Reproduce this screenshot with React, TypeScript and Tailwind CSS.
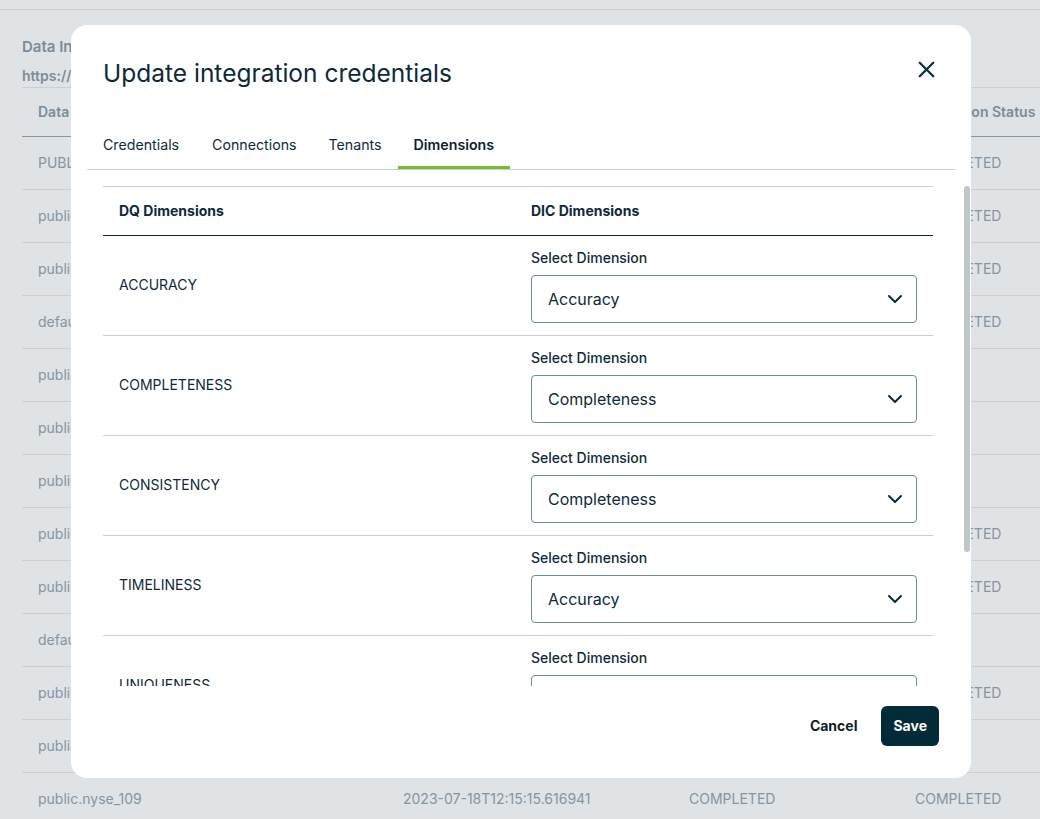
import React from 'react';
import { X, ChevronDown } from 'lucide-react';

const bgRows = [
  ['PUBLIC.NYSE_100', '2023-07-18T12:15:15.616941', 'COMPLETED', 'COMPLETED'],
  ['public.nyse_101', '2023-07-18T12:15:15.616941', 'COMPLETED', 'COMPLETED'],
  ['public.nyse_102', '2023-07-18T12:15:15.616941', 'COMPLETED', 'COMPLETED'],
  ['default.nyse_103', '2023-07-18T12:15:15.616941', 'COMPLETED', 'COMPLETED'],
  ['public.nyse_104', '2023-07-18T12:15:15.616941', 'COMPLETED', ''],
  ['public.nyse_105', '2023-07-18T12:15:15.616941', 'COMPLETED', ''],
  ['public.nyse_106', '2023-07-18T12:15:15.616941', 'COMPLETED', ''],
  ['public.nyse_107', '2023-07-18T12:15:15.616941', 'COMPLETED', 'COMPLETED'],
  ['public.nyse_108', '2023-07-18T12:15:15.616941', 'COMPLETED', 'COMPLETED'],
  ['default.nyse_110', '2023-07-18T12:15:15.616941', 'COMPLETED', ''],
  ['public.nyse_111', '2023-07-18T12:15:15.616941', 'COMPLETED', 'COMPLETED'],
  ['public.nyse_112', '2023-07-18T12:15:15.616941', 'COMPLETED', ''],
  ['public.nyse_109', '2023-07-18T12:15:15.616941', 'COMPLETED', 'COMPLETED'],
];

const dimensions = [
  { name: 'ACCURACY', value: 'Accuracy' },
  { name: 'COMPLETENESS', value: 'Completeness' },
  { name: 'CONSISTENCY', value: 'Completeness' },
  { name: 'TIMELINESS', value: 'Accuracy' },
  { name: 'UNIQUENESS', value: 'Uniqueness' },
];

const tabs = ['Credentials', 'Connections', 'Tenants', 'Dimensions'];

function BackgroundPage() {
  return (
    <div className="h-full w-full">
      <div className="h-[10px] border-b border-[#c8d0d5]" />
      <div className="pl-[22px]">
        <div className="pt-[27px] text-[15px] leading-5 font-semibold text-[#7b8c98]">Data Integration</div>
        <div className="mt-[9px] text-sm leading-5 font-semibold text-[#7b8c98] pb-px border-b border-[#c8d0d5]">
          https://dic.example.com/api
        </div>
        <div className="grid grid-cols-[365px_286px_226px_1fr] h-[49px] items-center border-b border-[#8796a1] text-sm font-semibold text-[#7b8c98]">
          <div className="pl-4">Data Source</div>
          <div className="pl-4">Last Updated</div>
          <div className="pl-4">Ingestion Status</div>
          <div className="pl-4 whitespace-nowrap">Integration Status</div>
        </div>
        {bgRows.map((r, i) => (
          <div
            key={i}
            className="grid grid-cols-[365px_286px_226px_1fr] h-[53px] items-center border-b border-[#c8d0d5] text-sm text-[#8595a2]"
          >
            <div className="pl-4">{r[0]}</div>
            <div className="pl-4">{r[1]}</div>
            <div className="pl-4">{r[2]}</div>
            <div className="pl-4">{r[3]}</div>
          </div>
        ))}
      </div>
    </div>
  );
}

function DimensionRow({ name, value }: { name: string; value: string }) {
  return (
    <div className="grid grid-cols-[412px_418px] h-[100px] border-b border-[#c8d0d5]">
      <div className="pl-4 pb-px flex items-center text-sm text-[#0d2a3a]">{name}</div>
      <div className="px-4 pt-3">
        <div className="text-sm leading-5 font-medium text-[#0d2a3a]">Select Dimension</div>
        <div className="mt-[7px] h-12 rounded border border-[#6b8ba0] flex items-center justify-between pl-4 pr-[9px]">
          <span className="text-base text-[#0d2a3a]">{value}</span>
          <ChevronDown size={24} strokeWidth={2} className="text-[#0d2a3a]" />
        </div>
      </div>
    </div>
  );
}

export default function App() {
  return (
    <div
      className="relative w-[1040px] h-[819px] overflow-hidden bg-[#dfe3e6]"
      style={{ fontFamily: 'Inter, "Noto Sans", sans-serif' }}
    >
      <BackgroundPage />

      <div className="absolute left-[71px] top-[25px] w-[900px] h-[753px] bg-white rounded-2xl flex flex-col">
        <div className="flex items-start justify-between pl-8 pr-[31px] pt-[32px]">
          <h2 className="text-[24.5px] leading-8 text-[#0d2a3a]">Update integration credentials</h2>
          <button className="-mt-[1px] text-[#0d3446]">
            <X size={27} strokeWidth={2.1} />
          </button>
        </div>

        <div className="mt-[32px] mx-4 flex border-b border-[#c8d0d5]">
          {tabs.map((t, i) => (
            <div
              key={t}
              className={`h-12 px-4 pt-[3px] flex items-center text-[14.2px] border-b-[3px] ${i === 0 ? 'mr-px' : ''} ${
                t === 'Dimensions'
                  ? 'border-[#78be20] font-semibold text-[#0a2231]'
                  : 'border-transparent text-[#0f2b3b]'
              }`}
            >
              {t}
            </div>
          ))}
        </div>

        <div className="relative h-[516px] overflow-hidden pl-8 pt-4">
          <div className="w-[830px]">
            <div className="grid grid-cols-[412px_418px] h-[50px] items-center border-t border-b border-t-[#c8d0d5] border-b-[#0f2533] text-sm font-bold text-[#0d2a3a]">
              <div className="pl-4">DQ Dimensions</div>
              <div className="pl-4">DIC Dimensions</div>
            </div>
            {dimensions.map(d => (
              <DimensionRow key={d.name} name={d.name} value={d.value} />
            ))}
          </div>
          <div className="absolute right-[1px] top-4 w-[6px] h-[366px] rounded-sm bg-[#bfc7cb]" />
        </div>

        <div className="flex justify-end items-center gap-2 pt-5 pb-8 pr-8">
          <button className="h-10 px-4 text-sm font-bold text-[#0f1f2a]">Cancel</button>
          <button className="h-10 px-3 rounded-md bg-[#022b3a] text-sm font-bold text-white">Save</button>
        </div>
      </div>
    </div>
  );
}
